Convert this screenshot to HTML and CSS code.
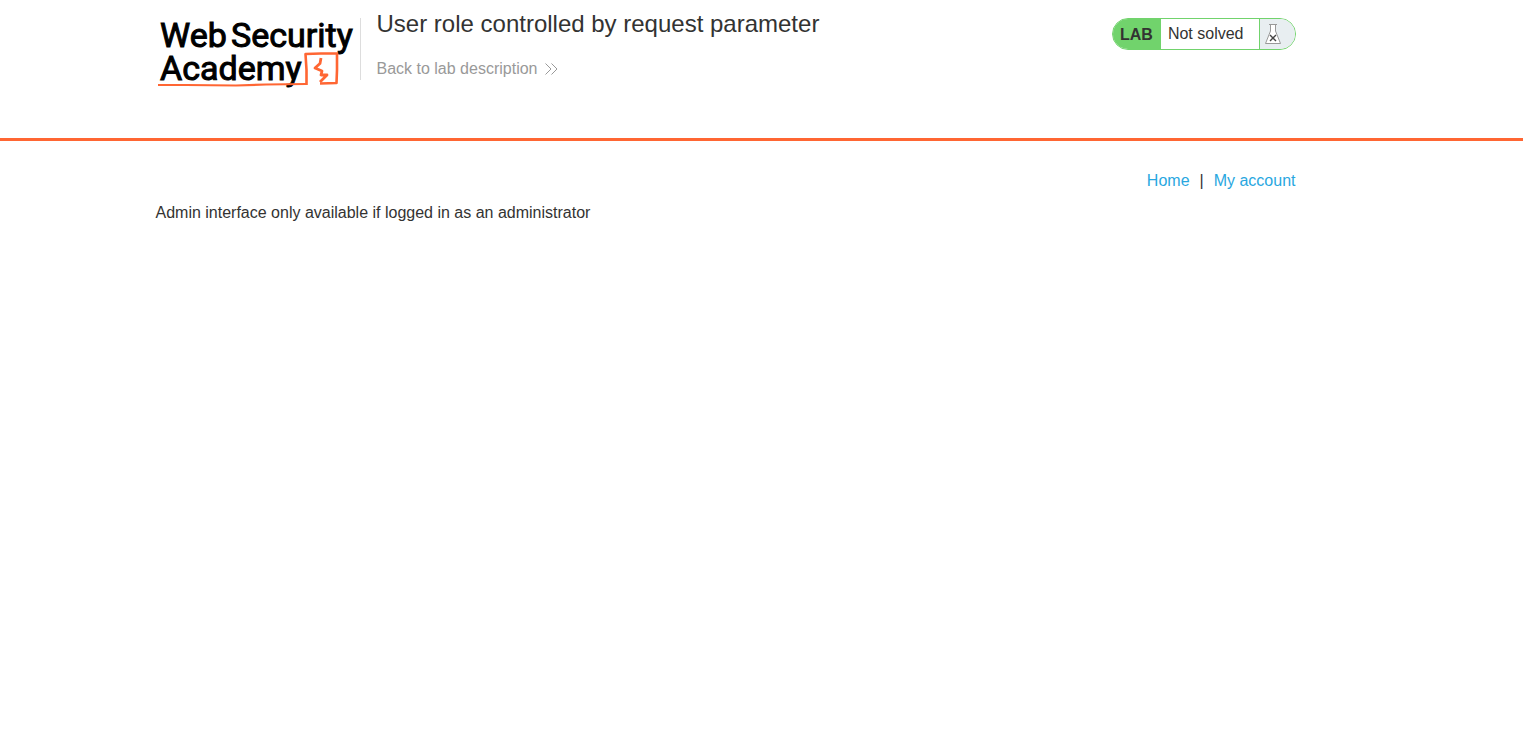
FILE: index.html
```html
<!DOCTYPE html>
<html lang="en">
<head>
<meta charset="utf-8">
<title>User role controlled by request parameter</title>
<link rel="stylesheet" href="styles.css">
</head>
<body>
<header class="lab-header">
  <div class="container lab-banner">
    <a class="logo" href="#" aria-label="Web Security Academy">
      <svg width="204" height="80" viewBox="0 0 204 80">
        <g class="logo-text">
          <text x="4" y="37">Web</text>
          <text x="75" y="37">Security</text>
          <text x="4" y="70">Academy</text>
        </g>
        <g fill="none" stroke="#ff6633" stroke-linejoin="round">
          <path d="M2 75H30L80 75.500L110 74.500L150 74" stroke-width="2.200"/>
          <path d="M150.500 75V60L149.500 44L165 43.500L181 43.500V60L180.500 73L164 73.500" stroke-width="2.600"/>
          <path d="M165 48L164 53.500L159 58L166 61L165 65H171L164 72" stroke-width="2.800"/>
        </g>
      </svg>
    </a>
    <div class="title-block">
      <h1 class="title">User role controlled by request parameter</h1>
      <a class="back-link" href="#">Back to lab description
        <svg width="13" height="12" viewBox="0 0 13 12" fill="none" stroke="currentColor" aria-hidden="true"><path d="M.5.5L6 6L.5 11.500M6.500.5L12 6L6.500 11.500"/></svg>
      </a>
    </div>
    <div class="lab-status">
      <span class="lab-tag">LAB</span>
      <span class="lab-state">Not solved</span>
      <span class="lab-icon">
        <svg width="18" height="22" viewBox="0 0 18 22" aria-hidden="true">
          <path d="M5 1.500H13M6.500 1.500V8L1.500 20.500H16.500L11.500 8V1.500" fill="#fff" stroke="#999"/>
          <path d="M6 12L12 18M12 12L6 18" stroke="#444" stroke-width="1.400"/>
        </svg>
      </span>
    </div>
  </div>
</header>
<main class="container">
  <nav class="top-links">
    <a href="#">Home</a><span>|</span><a href="#">My account</a>
  </nav>
  <p class="message">Admin interface only available if logged in as an administrator</p>
</main>
</body>
</html>
```
FILE: styles.css
```css
* { box-sizing: border-box; }

body {
  margin: 0;
  padding-right: 72px;
  background: #fff;
  color: #333332;
  font: 16px/24px "Liberation Sans", Arial, sans-serif;
}

a { text-decoration: none; }

.container {
  max-width: 1140px;
  margin: 0 auto;
}

.lab-header {
  margin-right: -72px;
  padding-right: 72px;
  border-bottom: 3px solid #ff6633;
}

.lab-banner {
  display: flex;
  align-items: flex-start;
  min-height: 138px;
}

.logo {
  height: 80px;
  margin-top: 10px;
}

.logo svg {
  display: block;
  overflow: visible;
}

.logo-text {
  fill: #000;
  stroke: #000;
  stroke-width: 1px;
  font: 400 34px Roboto, sans-serif;
}

.title-block {
  flex: 1;
  margin-top: 18px;
  padding-left: 16px;
  border-left: 1px solid #ddd;
  height: 62px;
}

.title {
  margin: -8px 0 19px;
  font-size: 24px;
  line-height: 28px;
  font-weight: 400;
}

.back-link {
  display: inline-flex;
  align-items: center;
  gap: 8px;
  line-height: 20px;
  color: #999;
}

.lab-status {
  display: flex;
  height: 32px;
  margin-top: 18px;
  overflow: hidden;
  border: 1px solid #71d36c;
  border-radius: 16px;
  line-height: 30px;
}

.lab-tag {
  padding: 1px 8px 0 7px;
  background: #71d36c;
  font-weight: 700;
}

.lab-state { padding: 0 15px 0 7px; }

.lab-icon {
  display: flex;
  align-items: center;
  width: 36px;
  padding-left: 4px;
  border-left: 1px solid #71d36c;
  background: #e8eef1;
}

.top-links {
  display: flex;
  justify-content: flex-end;
  gap: 10px;
  padding-top: 28px;
}

.top-links a { color: #29a7df; }

.message { margin: 8px 0 0; }
```
